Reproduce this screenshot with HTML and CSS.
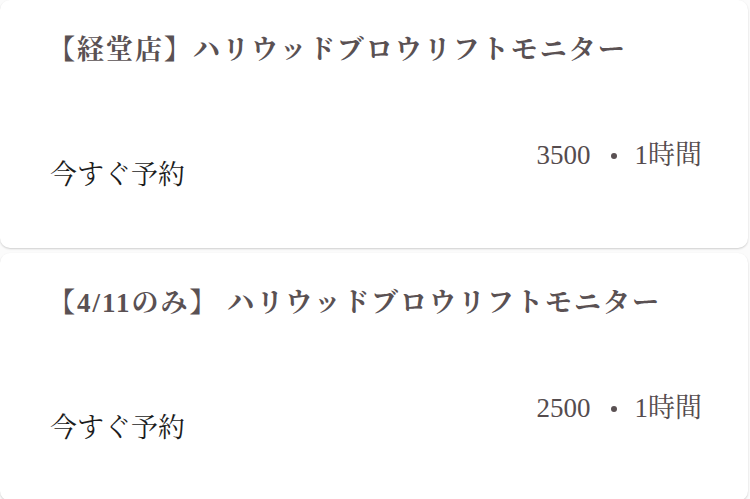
FILE: index.html
```html
<!DOCTYPE html>
<html lang="ja">

<head>
    <meta charset="UTF-8">
    <meta name="viewport" content="width=device-width, initial-scale=1.0">
    <title>メニュー</title>
    <link rel="stylesheet" href="styles.css">
</head>

<body>
    <div class="menu-list">
        <!-- 経堂店 -->
        <div class="menu-card">
            <h2 class="menu-title">【経堂店】ハリウッドブロウリフトモニター</h2>
            <div class="menu-bottom">
                <span class="book-link">今すぐ予約</span>
                <span class="menu-price">3500<span class="dot"></span>1時間</span>
            </div>
        </div>

        <!-- 4/11のみ -->
        <div class="menu-card">
            <h2 class="menu-title">【4/11のみ】 ハリウッドブロウリフトモニター</h2>
            <div class="menu-bottom">
                <span class="book-link">今すぐ予約</span>
                <span class="menu-price">2500<span class="dot"></span>1時間</span>
            </div>
        </div>
    </div>
</body>

</html>
```

FILE: styles.css
```css
body {
    margin: 0;
    padding: 0;
    background-color: #fbfbfb;
    font-family: "Liberation Serif", "Noto Serif CJK JP", "Noto Sans CJK JP", serif;
    overflow: hidden;
}

.menu-list {
    display: flex;
    flex-direction: column;
    gap: 5px;
    padding: 0 2px 0 0;
}

.menu-card {
    height: 248px;
    box-sizing: border-box;
    background-color: #fff;
    border-radius: 10px;
    box-shadow: 0 1px 2px rgba(0, 0, 0, 0.18);
    padding: 28px 46px 0 50px;
}

.menu-title {
    margin: 0 0 0 -2px;
    font-size: 27px;
    line-height: 44px;
    font-weight: bold;
    letter-spacing: 2px;
    color: #5a5153;
    white-space: nowrap;
}

.menu-bottom {
    display: flex;
    justify-content: space-between;
    align-items: flex-start;
    margin-top: 66px;
}

.book-link {
    margin-top: 20px;
    font-size: 27px;
    line-height: 34px;
    color: #1c1c1c;
}

.menu-price {
    font-size: 27px;
    line-height: 34px;
    color: #554c4e;
}

.dot {
    display: inline-block;
    width: 6px;
    height: 6px;
    border-radius: 50%;
    background-color: #5a5153;
    margin: 0 18px 0 20px;
    vertical-align: 5px;
}
```
